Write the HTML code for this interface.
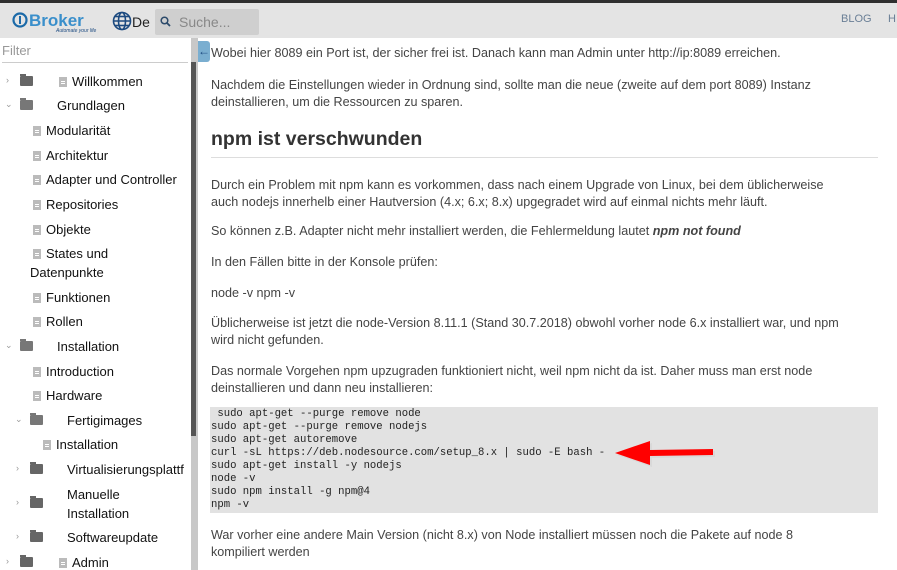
<!DOCTYPE html>
<html><head><meta charset="utf-8"><style>
*{margin:0;padding:0;box-sizing:border-box}
body{width:897px;height:570px;overflow:hidden;background:#fff;font-family:"Liberation Sans",Arial,sans-serif;position:relative}
.a{position:absolute;white-space:nowrap}
.top{left:0;top:0;width:897px;height:3px;background:#2f2f2f}
.hdr{left:0;top:3px;width:897px;height:35px;background:#e4e4e4}
.side{font-size:13px;color:#111}
.doc{display:inline-block;width:8px;height:10px;background:#bbb;position:relative;vertical-align:-1px;margin-right:5px}
.doc:after{content:"";position:absolute;left:2px;top:4px;width:4px;height:1px;background:#fff;box-shadow:0 2px 0 #fff}
.fold{position:absolute;width:13px;height:10px;background:#666;border-radius:1px}
.fold:before{content:"";position:absolute;left:0;top:-2px;width:6px;height:2px;background:inherit}
.chev{position:absolute;font-size:9px;color:#999}
.c{font-size:12.6px;color:#444;line-height:17px;white-space:normal;width:650px}
pre.a{font-family:"Liberation Mono",monospace;font-size:10.3px;line-height:13px;color:#222;white-space:pre}
</style></head><body>
<div class="a top"></div>
<div class="a hdr"></div>
<svg class="a" style="left:12px;top:12px" width="88" height="22" viewBox="0 0 88 22">
<circle cx="8" cy="8" r="6.5" fill="none" stroke="#1c6aa8" stroke-width="2.2"/>
<rect x="7" y="4" width="2" height="8" fill="#1c6aa8"/>
<text x="17" y="14" font-family="Liberation Sans" font-weight="bold" font-size="17" fill="#3a8fcb">Broker</text>
<text x="44" y="20" font-family="Liberation Sans" font-size="5" font-style="italic" fill="#1c4a80">Automate your life</text>
</svg>
<svg class="a" style="left:112px;top:11px" width="20" height="20" viewBox="0 0 20 20"><g fill="none" stroke="#1c4a80" stroke-width="1.6"><circle cx="10" cy="10" r="8.5"/><ellipse cx="10" cy="10" rx="3.5" ry="8.5"/><line x1="1.5" y1="10" x2="18.5" y2="10"/><line x1="3" y1="5.5" x2="17" y2="5.5"/><line x1="3" y1="14.5" x2="17" y2="14.5"/></g></svg>
<div class="a" style="left:132px;top:14px;font-size:14px;color:#222">De</div>
<div class="a" style="left:155px;top:9px;width:104px;height:26px;background:#cfcfcf;border-radius:2px"></div>
<svg class="a" style="left:160px;top:16px" width="11" height="11" viewBox="0 0 11 11"><circle cx="4.5" cy="4.5" r="3.3" fill="none" stroke="#2c4a6a" stroke-width="1.5"/><line x1="7" y1="7" x2="10" y2="10" stroke="#2c4a6a" stroke-width="1.8"/></svg>
<div class="a" style="left:179px;top:14px;font-size:14px;color:#888">Suche...</div>
<div class="a" style="left:841px;top:13px;font-size:11px;color:#6a7f96">BLOG</div>
<div class="a" style="left:888px;top:13px;font-size:11px;color:#6a7f96">H</div>
<div class="a" style="left:2px;top:43px;font-size:13px;color:#999">Filter</div>
<div class="a" style="left:2px;top:62px;width:186px;height:1px;background:#ccc"></div>
<div class="a" style="left:191px;top:38px;width:7px;height:532px;background:#c8c8c8"></div>
<div class="a" style="left:191px;top:62px;width:5px;height:374px;background:#555"></div>
<div class="side">
<span class="chev" style="left:6px;top:75px">›</span><div class="fold" style="left:20px;top:76px"></div><div class="a" style="left:59px;top:74px"><span class="doc"></span>Willkommen</div>
<span class="chev" style="left:5px;top:99px">⌄</span><div class="fold" style="left:20px;top:100px;background:#777"></div><div class="a" style="left:57px;top:98px">Grundlagen</div>
<div class="a" style="left:33px;top:123px"><span class="doc"></span>Modularität</div>
<div class="a" style="left:33px;top:148px"><span class="doc"></span>Architektur</div>
<div class="a" style="left:33px;top:172px"><span class="doc"></span>Adapter und Controller</div>
<div class="a" style="left:33px;top:197px"><span class="doc"></span>Repositories</div>
<div class="a" style="left:33px;top:222px"><span class="doc"></span>Objekte</div>
<div class="a" style="left:33px;top:246px"><span class="doc"></span>States und</div>
<div class="a" style="left:30px;top:265px">Datenpunkte</div>
<div class="a" style="left:33px;top:290px"><span class="doc"></span>Funktionen</div>
<div class="a" style="left:33px;top:314px"><span class="doc"></span>Rollen</div>
<span class="chev" style="left:5px;top:340px">⌄</span><div class="fold" style="left:20px;top:341px;background:#777"></div><div class="a" style="left:57px;top:339px">Installation</div>
<div class="a" style="left:33px;top:364px"><span class="doc"></span>Introduction</div>
<div class="a" style="left:33px;top:388px"><span class="doc"></span>Hardware</div>
<span class="chev" style="left:15px;top:414px">⌄</span><div class="fold" style="left:30px;top:415px;background:#777"></div><div class="a" style="left:67px;top:413px">Fertigimages</div>
<div class="a" style="left:43px;top:437px"><span class="doc"></span>Installation</div>
<span class="chev" style="left:16px;top:463px">›</span><div class="fold" style="left:30px;top:464px"></div><div class="a" style="left:67px;top:462px">Virtualisierungsplattf</div>
<span class="chev" style="left:16px;top:497px">›</span><div class="fold" style="left:30px;top:498px"></div><div class="a" style="left:67px;top:487px">Manuelle</div><div class="a" style="left:67px;top:506px">Installation</div>
<span class="chev" style="left:16px;top:531px">›</span><div class="fold" style="left:30px;top:532px"></div><div class="a" style="left:67px;top:530px">Softwareupdate</div>
<span class="chev" style="left:6px;top:556px">›</span><div class="fold" style="left:20px;top:557px"></div><div class="a" style="left:59px;top:555px"><span class="doc"></span>Admin</div>
</div>
<div class="a" style="left:198px;top:41px;width:12px;height:21px;background:#7aaed0;border-radius:0 3px 3px 0;color:#1c4a80;font-size:12px;line-height:20px;text-align:center">←</div>
<div class="a c" style="left:211px;top:45px;width:680px">Wobei hier 8089 ein Port ist, der sicher frei ist. Danach kann man Admin unter http://ip:8089 erreichen.</div>
<div class="a c" style="left:211px;top:77px">Nachdem die Einstellungen wieder in Ordnung sind, sollte man die neue (zweite auf dem port 8089) Instanz deinstallieren, um die Ressourcen zu sparen.</div>
<div class="a" style="left:211px;top:128px;font-size:19.5px;font-weight:bold;color:#333">npm ist verschwunden</div>
<div class="a" style="left:211px;top:157px;width:667px;height:1px;background:#ddd"></div>
<div class="a c" style="left:211px;top:177px;width:640px">Durch ein Problem mit npm kann es vorkommen, dass nach einem Upgrade von Linux, bei dem üblicherweise auch nodejs innerhelb einer Hautversion (4.x; 6.x; 8.x) upgegradet wird auf einmal nichts mehr läuft.</div>
<div class="a c" style="left:211px;top:223px;width:680px">So können z.B. Adapter nicht mehr installiert werden, die Fehlermeldung lautet <b><i>npm not found</i></b></div>
<div class="a c" style="left:211px;top:254px">In den Fällen bitte in der Konsole prüfen:</div>
<div class="a c" style="left:211px;top:285px">node -v npm -v</div>
<div class="a c" style="left:211px;top:315px">Üblicherweise ist jetzt die node-Version 8.11.1 (Stand 30.7.2018) obwohl vorher node 6.x installiert war, und npm wird nicht gefunden.</div>
<div class="a c" style="left:211px;top:363px">Das normale Vorgehen npm upzugraden funktioniert nicht, weil npm nicht da ist. Daher muss man erst node deinstallieren und dann neu installieren:</div>
<div class="a" style="left:210px;top:407px;width:668px;height:106px;background:#e2e2e2"></div>
<pre class="a" style="left:211px;top:408px;font-size:10.6px"> sudo apt-get --purge remove node
sudo apt-get --purge remove nodejs
sudo apt-get autoremove
curl -sL https://deb.nodesource.com/setup_8.x | sudo -E bash -
sudo apt-get install -y nodejs
node -v
sudo npm install -g npm@4
npm -v</pre>
<svg class="a" style="left:612px;top:437px" width="106" height="30" viewBox="0 0 106 30"><polygon points="3,16 38,4 38,13 101,12 101,18 38,19 38,28" fill="#d9d9d9" transform="translate(2,2)"/><polygon points="3,16 38,4 38,13 101,12 101,18 38,19 38,28" fill="#f00"/></svg>
<div class="a c" style="left:211px;top:527px;width:620px">War vorher eine andere Main Version (nicht 8.x) von Node installiert müssen noch die Pakete auf node 8 kompiliert werden</div>
</body></html>
